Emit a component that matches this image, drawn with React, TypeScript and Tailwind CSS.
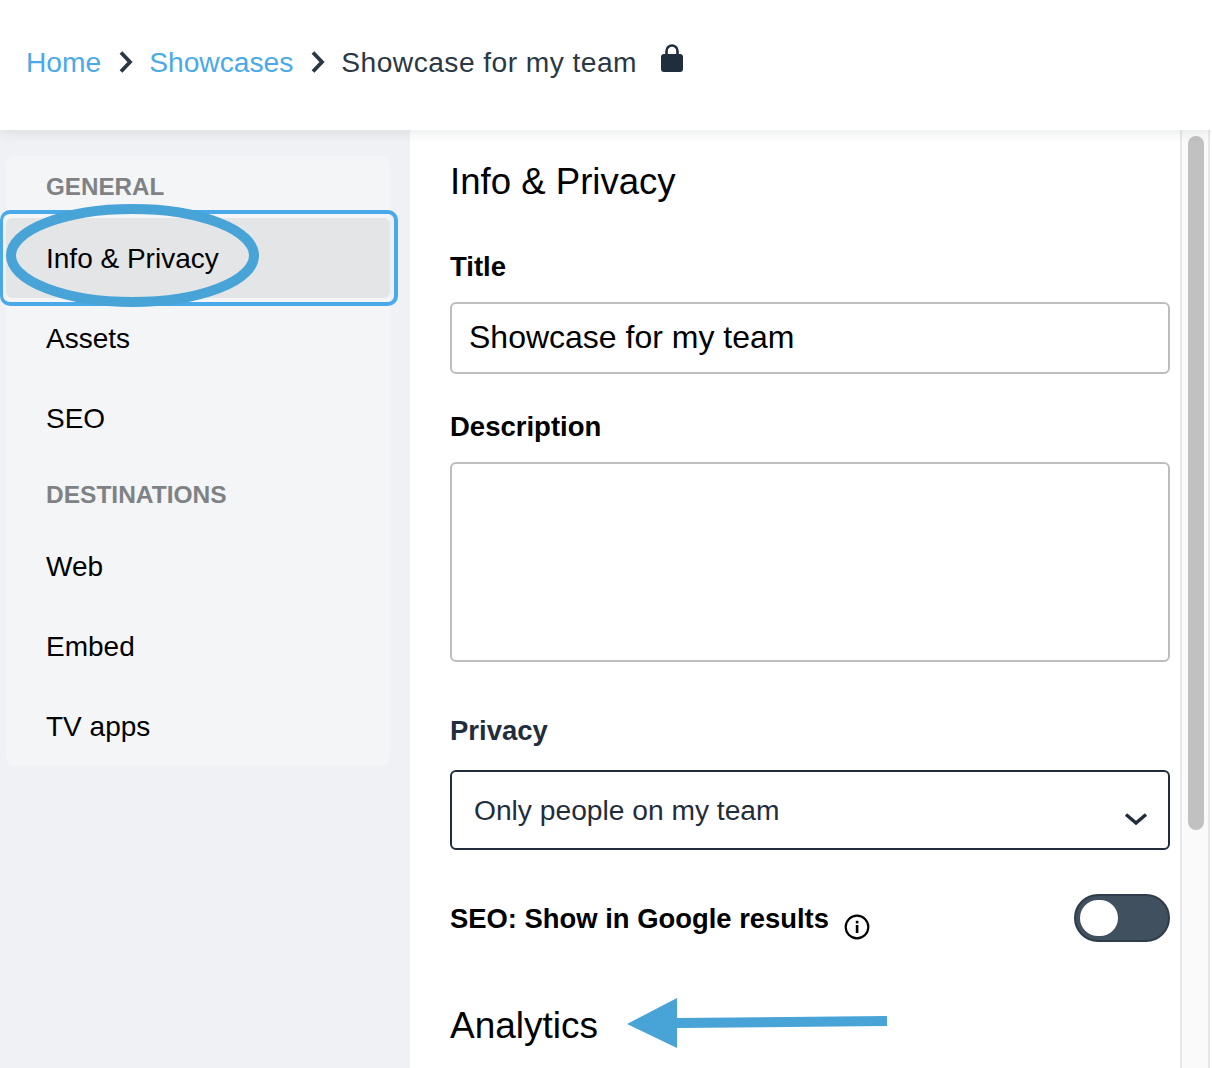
import React from "react";

const Chevron = () => (
  <svg width="14" height="22" viewBox="0 0 14 22" fill="none" className="ml-[2px] shrink-0">
    <path d="M2 1.500l9 9.500-9 9.500" stroke="#2a3744" strokeWidth="3.800" />
  </svg>
);

const NavItem = ({ label, active }: { label: string; active?: boolean }) => (
  <div className={"relative flex h-20 items-center pl-10 pt-[1px] text-[28px] text-black " + (active ? "rounded-md bg-[#e4e5e7]" : "")}>
    {active && (
      <div className="absolute -bottom-2 -left-[6px] -right-2 -top-2 rounded-[10px] border-4 border-l-[3px] border-[#4aa9e9]" />
    )}
    <span className="relative">{label}</span>
  </div>
);

export default function App() {
  return (
    <div className="relative flex h-[1068px] w-[1212px] flex-col overflow-hidden bg-white font-['Liberation_Sans',Arial,sans-serif]">
      <header className="relative z-10 flex h-[130px] shrink-0 items-center gap-4 bg-white pb-[6px] pl-[26px] text-[28.2px] shadow-[0_2px_12px_rgba(30,40,60,0.1)]">
        <span className="text-[#4aa9e9]">Home</span>
        <Chevron />
        <span className="text-[#4aa9e9]">Showcases</span>
        <Chevron />
        <span className="tracking-[0.45px] text-[#2a3744]">Showcase for my team</span>
        <svg width="24" height="30" viewBox="0 0 24 30" className="mb-[8px] ml-[7px] shrink-0">
          <path d="M6.500 12V8a5.500 5.500 0 0 1 11 0v4" fill="none" stroke="#1f2d3d" strokeWidth="2.600" />
          <rect x="1" y="11" width="22" height="18" rx="3" fill="#1f2d3d" />
        </svg>
      </header>

      <div className="flex min-h-0 flex-1">
        <aside className="w-[410px] shrink-0 bg-[#f0f1f4] pt-[26px] pl-[6px] pr-5">
          <div className="rounded-lg bg-[#f4f5f7]">
            <div className="flex h-[62px] items-center pl-10 pt-[1px] text-[24.2px] font-bold text-[#7f8285]">GENERAL</div>
            <NavItem label="Info & Privacy" active />
            <NavItem label="Assets" />
            <NavItem label="SEO" />
            <div className="flex h-[68px] items-center pl-10 pt-[6px] text-[24.5px] font-bold text-[#7f8285]">DESTINATIONS</div>
            <NavItem label="Web" />
            <NavItem label="Embed" />
            <NavItem label="TV apps" />
          </div>
        </aside>

        <main className="w-[770px] shrink-0 pl-10 pr-[10px] pt-[28px] text-black">
          <h1 className="text-[36.6px] leading-[48px]">Info &amp; Privacy</h1>
          <label className="mt-[43px] block text-[27.5px] font-bold leading-[36px]">Title</label>
          <div className="mt-[17px] flex h-[72px] items-center rounded-md border-2 border-[#bdbdbd] pb-[2px] pl-[17px] text-[32px]">
            Showcase for my team
          </div>
          <label className="mt-[35px] block text-[27.5px] font-bold leading-[36px]">Description</label>
          <div className="mt-[17px] h-[200px] rounded-md border-2 border-[#bdbdbd]" />
          <label className="mt-[51px] block text-[27.5px] font-bold leading-[36px] text-[#1f2d3d]">Privacy</label>
          <div className="mt-[21px] flex h-20 items-center justify-between rounded-md border-2 border-[#1f2d3d] pl-[22px] pr-[20px] text-[28.2px] text-[#1f2d3d]">
            <span className="pt-[1px]">Only people on my team</span>
            <svg width="24" height="14" viewBox="0 0 24 14" fill="none" className="mt-[18px]">
              <path d="M2 2.500l10 8.500 10-8.500" stroke="#1f2d3d" strokeWidth="3.400" />
            </svg>
          </div>
          <div className="mt-[44px] flex h-12 items-center justify-between">
            <div className="flex items-center gap-[15px]">
              <span className="pt-[2px] text-[27.4px] font-bold">SEO: Show in Google results</span>
              <svg width="26" height="26" viewBox="0 0 26 26" fill="none" className="mt-[18px]">
                <circle cx="13" cy="13" r="11.300" stroke="#000" strokeWidth="2.200" />
                <rect x="11.800" y="11" width="2.600" height="8" fill="#000" />
                <rect x="11.800" y="6.800" width="2.600" height="2.600" fill="#000" />
              </svg>
            </div>
            <div className="flex h-12 w-24 items-center rounded-full border-2 border-[#2f3c49] bg-[#40505f] pl-1">
              <div className="h-9 w-[38px] rounded-full bg-white" />
            </div>
          </div>
          <h2 className="mt-[60px] text-[37px] leading-[48px]">Analytics</h2>
        </main>

        <div className="w-[28px] shrink-0 border-l-2 border-[#e8e8e8] bg-[#fafafa] pl-[6px] pr-[4px] pt-[6px]">
          <div className="h-[694px] rounded-full bg-[#c1c1c1]" />
        </div>
        <div className="flex-1 border-l-2 border-[#e8e8e8] bg-white" />
      </div>

      <svg className="pointer-events-none absolute left-0 top-0 z-20" width="1212" height="1068" viewBox="0 0 1212 1068" fill="none">
        <ellipse cx="132.500" cy="255.500" rx="121.500" ry="46.500" stroke="#48a3d6" strokeWidth="10" />
        <path d="M627 1024L677 998V1018L887 1016V1026L677 1028V1048Z" fill="#48a3d6" />
      </svg>
    </div>
  );
}
